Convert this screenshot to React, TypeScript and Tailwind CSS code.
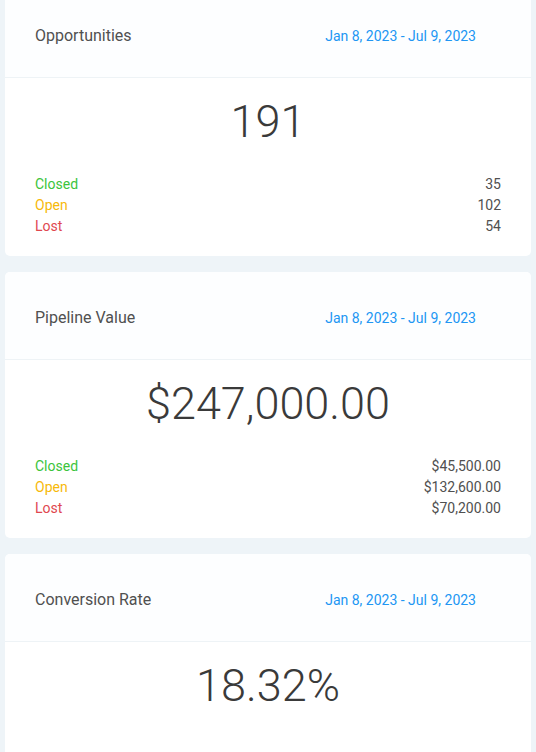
const range = 'Jan 8, 2023 - Jul 9, 2023'

type Row = { label: string; value: string; color: string }

function StatCard(props: { title: string; value: string; rows?: Row[] }) {
  return (
    <div className="overflow-hidden rounded-[5px] bg-white">
      <div className="flex h-[88px] items-center justify-between border-b border-[#eef3f6] bg-[#fdfeff] pl-[30px] pr-[55px] pt-[5px]">
        <span className="text-[16px] text-[#505050]">{props.title}</span>
        <span className="text-[14px] text-[#2196f3]">{range}</span>
      </div>
      <div className="px-[30px] pb-[19px] pt-[15px]">
        <div className="text-center text-[45px] font-light leading-[58px] text-[#3a3a3a]">
          {props.value}
        </div>
        {props.rows ? (
          <div className="mt-[23px] text-[14px] leading-[21px]">
            {props.rows.map((row) => (
              <div key={row.label} className="flex justify-between">
                <span className={row.color}>{row.label}</span>
                <span className="text-[#505050]">{row.value}</span>
              </div>
            ))}
          </div>
        ) : (
          <div className="h-[80px]" />
        )}
      </div>
    </div>
  )
}

export default function App() {
  return (
    <div
      className="min-h-[752px] bg-[#eef4f8] px-[5px]"
      style={{ fontFamily: 'Roboto, "Liberation Sans", sans-serif' }}
    >
      <div className="-mt-[10px] flex flex-col gap-[16px]">
        <StatCard
          title="Opportunities"
          value="191"
          rows={[
            { label: 'Closed', value: '35', color: 'text-[#3cc43c]' },
            { label: 'Open', value: '102', color: 'text-[#f7b90a]' },
            { label: 'Lost', value: '54', color: 'text-[#e0474f]' },
          ]}
        />
        <StatCard
          title="Pipeline Value"
          value="$247,000.00"
          rows={[
            { label: 'Closed', value: '$45,500.00', color: 'text-[#3cc43c]' },
            { label: 'Open', value: '$132,600.00', color: 'text-[#f7b90a]' },
            { label: 'Lost', value: '$70,200.00', color: 'text-[#e0474f]' },
          ]}
        />
        <StatCard title="Conversion Rate" value="18.32%" />
      </div>
    </div>
  )
}
